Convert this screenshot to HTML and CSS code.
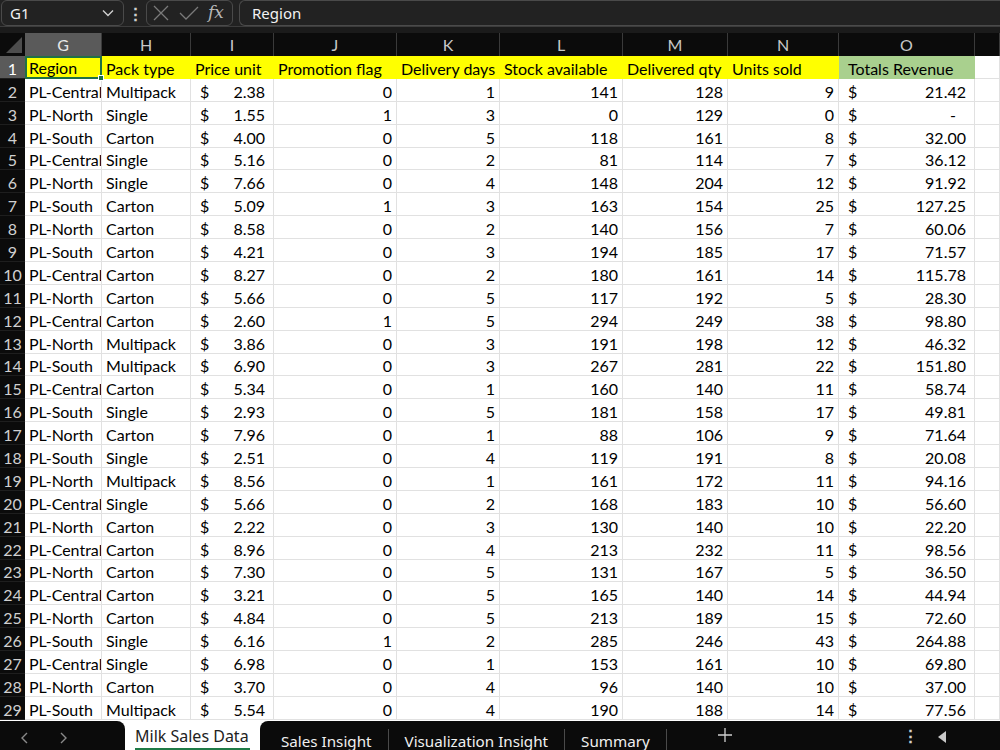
FILE: index.html
```html
<!DOCTYPE html>
<html lang="en">
<head>
    <meta charset="UTF-8">
    <title>Milk Sales Data</title>
    <link rel="stylesheet" href="styles.css">
</head>
<body>

<div class="app">
    <div class="formula-bar">
        <div class="name-box">
            <span>G1</span>
            <svg class="chev" width="12" height="8" viewBox="0 0 12 8"><path d="M1 1.5 L6 6.5 L11 1.5" fill="none" stroke="#d0d0d0" stroke-width="1.4"/></svg>
        </div>
        <span class="dots">&#8942;</span>
        <div class="fx-box">
            <svg width="18" height="18" viewBox="0 0 18 18"><path d="M2 2 L16 16 M16 2 L2 16" stroke="#7a7a7a" stroke-width="1.3"/></svg>
            <svg width="20" height="18" viewBox="0 0 20 18"><path d="M1 9 L7 15 L19 3" fill="none" stroke="#7a7a7a" stroke-width="1.3"/></svg>
            <span class="fx">fx</span>
        </div>
        <div class="formula-input">Region</div>
    </div>
    <div class="bar-gap"></div>

    <div class="sheet" id="sheet"></div>

    <div class="tabs">
        <div class="tabs-left">
            <svg width="10" height="14" viewBox="0 0 10 14"><path d="M7 2 L2 7 L7 12" fill="none" stroke="#8a8a8a" stroke-width="1.4"/></svg>
            <svg width="10" height="14" viewBox="0 0 10 14"><path d="M3 2 L8 7 L3 12" fill="none" stroke="#8a8a8a" stroke-width="1.4"/></svg>
        </div>
        <div class="tab active">Milk Sales Data</div>
        <div class="tabs-right">
            <div class="tab">Sales Insight</div>
            <div class="tab">Visualization Insight</div>
            <div class="tab">Summary</div>
            <svg class="add" width="14" height="14" viewBox="0 0 14 14"><path d="M7 0 V14 M0 7 H14" stroke="#d0d0d0" stroke-width="1.3"/></svg>
            <span class="more">&#8942;</span>
            <svg class="scroll-left" width="10" height="12" viewBox="0 0 10 12"><path d="M9 0 L9 12 L1 6 Z" fill="#c8c8c8"/></svg>
        </div>
    </div>
</div>

<script>
    var columns = ['G', 'H', 'I', 'J', 'K', 'L', 'M', 'N', 'O', ''];
    var headers = ['Region', 'Pack type', 'Price unit', 'Promotion flag', 'Delivery days', 'Stock available', 'Delivered qty', 'Units sold', 'Totals Revenue'];
    var rows = [
        ['PL-Central', 'Multipack', '2.38', 0, 1, 141, 128, 9, '21.42'],
        ['PL-North', 'Single', '1.55', 1, 3, 0, 129, 0, '-'],
        ['PL-South', 'Carton', '4.00', 0, 5, 118, 161, 8, '32.00'],
        ['PL-Central', 'Single', '5.16', 0, 2, 81, 114, 7, '36.12'],
        ['PL-North', 'Single', '7.66', 0, 4, 148, 204, 12, '91.92'],
        ['PL-South', 'Carton', '5.09', 1, 3, 163, 154, 25, '127.25'],
        ['PL-North', 'Carton', '8.58', 0, 2, 140, 156, 7, '60.06'],
        ['PL-South', 'Carton', '4.21', 0, 3, 194, 185, 17, '71.57'],
        ['PL-Central', 'Carton', '8.27', 0, 2, 180, 161, 14, '115.78'],
        ['PL-North', 'Carton', '5.66', 0, 5, 117, 192, 5, '28.30'],
        ['PL-Central', 'Carton', '2.60', 1, 5, 294, 249, 38, '98.80'],
        ['PL-North', 'Multipack', '3.86', 0, 3, 191, 198, 12, '46.32'],
        ['PL-South', 'Multipack', '6.90', 0, 3, 267, 281, 22, '151.80'],
        ['PL-Central', 'Carton', '5.34', 0, 1, 160, 140, 11, '58.74'],
        ['PL-South', 'Single', '2.93', 0, 5, 181, 158, 17, '49.81'],
        ['PL-North', 'Carton', '7.96', 0, 1, 88, 106, 9, '71.64'],
        ['PL-South', 'Single', '2.51', 0, 4, 119, 191, 8, '20.08'],
        ['PL-North', 'Multipack', '8.56', 0, 1, 161, 172, 11, '94.16'],
        ['PL-Central', 'Single', '5.66', 0, 2, 168, 183, 10, '56.60'],
        ['PL-North', 'Carton', '2.22', 0, 3, 130, 140, 10, '22.20'],
        ['PL-Central', 'Carton', '8.96', 0, 4, 213, 232, 11, '98.56'],
        ['PL-North', 'Carton', '7.30', 0, 5, 131, 167, 5, '36.50'],
        ['PL-Central', 'Carton', '3.21', 0, 5, 165, 140, 14, '44.94'],
        ['PL-North', 'Carton', '4.84', 0, 5, 213, 189, 15, '72.60'],
        ['PL-South', 'Single', '6.16', 1, 2, 285, 246, 43, '264.88'],
        ['PL-Central', 'Single', '6.98', 0, 1, 153, 161, 10, '69.80'],
        ['PL-North', 'Carton', '3.70', 0, 4, 96, 140, 10, '37.00'],
        ['PL-South', 'Multipack', '5.54', 0, 4, 190, 188, 14, '77.56']
    ];

    var html = '<div class="corner"></div>';
    columns.forEach(function (c, i) {
        html += '<div class="col-head' + (i === 0 ? ' selected' : '') + '">' + c + '</div>';
    });

    html += '<div class="row-head selected">1</div>';
    headers.forEach(function (h, i) {
        var cls = i === 8 ? 'cell green' : 'cell yellow';
        if (i === 0) cls += ' active';
        html += '<div class="' + cls + '">' + h + (i === 0 ? '<span class="handle"></span>' : '') + '</div>';
    });
    html += '<div class="cell"></div>';

    function money(v) {
        var cls = v === '-' ? 'num dash' : 'num';
        return '<div class="cell money"><span>$</span><span class="' + cls + '">' + v + '</span></div>';
    }

    rows.forEach(function (r, n) {
        html += '<div class="row-head">' + (n + 2) + '</div>';
        html += '<div class="cell">' + r[0] + '</div>';
        html += '<div class="cell">' + r[1] + '</div>';
        html += money(r[2]);
        for (var k = 3; k < 8; k++) {
            html += '<div class="cell right">' + r[k] + '</div>';
        }
        html += money(r[8]);
        html += '<div class="cell"></div>';
    });

    document.getElementById('sheet').innerHTML = html;
</script>

</body>
</html>
```

FILE: styles.css
```css
* {
    box-sizing: border-box;
}
body {
    margin: 0;
    width: 1000px;
    height: 750px;
    overflow: hidden;
    background-color: #fff;
    font-family: "Noto Sans", "Open Sans", sans-serif;
}
.app {
    display: flex;
    flex-direction: column;
    height: 750px;
}

/* formula bar */
.formula-bar {
    height: 27px;
    background-color: #222;
    border-bottom: 1px solid #3c3c3c;
    display: flex;
    align-items: center;
    padding-left: 1px;
    color: #f2f2f2;
    font-size: 15px;
}
.name-box {
    width: 123px;
    height: 26px;
    border: 1px solid #4a4a4a;
    border-radius: 6px;
    display: flex;
    align-items: center;
    justify-content: space-between;
    padding: 0 9px 0 8px;
}
.dots {
    width: 22px;
    text-align: center;
    font-size: 17px;
    font-weight: bold;
    color: #cfcfcf;
}
.fx-box {
    width: 87px;
    height: 26px;
    border: 1px solid #4a4a4a;
    border-radius: 6px;
    display: flex;
    align-items: center;
    gap: 9px;
    padding-left: 5px;
}
.fx {
    font-family: "DejaVu Serif", "Liberation Serif", serif;
    font-style: italic;
    font-size: 17px;
    color: #b8b8b8;
    margin-top: -2px;
}
.formula-input {
    flex: 1;
    height: 26px;
    margin-left: 6px;
    border: 1px solid #4a4a4a;
    border-right: none;
    border-radius: 6px 0 0 6px;
    padding-left: 12px;
    line-height: 24px;
}
.bar-gap {
    height: 6px;
    background-color: #1b1b1b;
}

/* sheet grid */
.sheet {
    display: grid;
    grid-template-columns: 25px 77px 89px 83px 123px 103px 123px 105px 111px 136px 1fr;
    grid-template-rows: 23px repeat(29, 22.9px);
    font-family: Lato, "Liberation Sans", sans-serif;
    font-size: 16px;
    color: #000;
    overflow: hidden;
}
.corner {
    background-color: #0b0b0b;
    position: relative;
}
.corner::after {
    content: "";
    position: absolute;
    right: 3px;
    bottom: 3px;
    border-style: solid;
    border-width: 0 0 16px 16px;
    border-color: transparent transparent #4d4d4d transparent;
}
.col-head {
    background-color: #0b0b0b;
    color: #c8c8c8;
    border-right: 1px solid #3a3a3a;
    text-align: center;
    line-height: 23px;
}
.col-head.selected {
    background-color: #5a5a5a;
    color: #e8e8e8;
}
.row-head {
    background-color: #0b0b0b;
    color: #d0d0d0;
    text-align: center;
    display: flex;
    align-items: flex-end;
    justify-content: center;
    padding-bottom: 0;
    border-bottom: 1px solid #1e1e1e;
}
.row-head.selected {
    background-color: #5a5a5a;
    color: #fff;
}
.cell {
    border-right: 1px solid #e1e1e1;
    border-bottom: 1px solid #e1e1e1;
    padding: 0 4px 0 4px;
    display: flex;
    align-items: flex-end;
    white-space: nowrap;
    overflow: hidden;
}
.cell.right {
    justify-content: flex-end;
}
.cell.yellow {
    background-color: #ffff00;
    border-color: #ffff00;
}
.cell.green {
    background-color: #a9d08e;
    border-color: #a9d08e;
    padding-left: 9px;
}
.cell.active {
    border: 2px solid #1f7145;
    padding-left: 2px;
    overflow: visible;
    position: relative;
}
.handle {
    position: absolute;
    right: -4px;
    bottom: -4px;
    width: 6px;
    height: 6px;
    background-color: #1f7145;
    border: 1px solid #fff;
}
.money {
    justify-content: space-between;
    padding: 0 8px 0 9px;
}
.num.dash {
    padding-right: 10px;
}

/* sheet tabs */
.tabs {
    height: 29px;
    margin-top: auto;
    display: flex;
    background-color: #fff;
    font-size: 15.2px;
}
.tabs-left {
    width: 125px;
    background-color: #0b0b0b;
    border-top-right-radius: 8px;
    display: flex;
    align-items: center;
    gap: 28px;
    padding-left: 20px;
    padding-top: 4px;
}
.tab {
    padding: 2px 16px 0 16px;
    color: #f0f0f0;
    border-right: 1px solid #4a4a4a;
    margin-top: 8px;
    line-height: 21px;
    white-space: nowrap;
}
.tab.active {
    width: 135px;
    margin-top: 0;
    padding: 5px 0 0 10px;
    font-size: 16px;
    color: #222;
    border-right: none;
    background-color: #fff;
    position: relative;
}
.tab.active::after {
    content: "";
    position: absolute;
    left: 10px;
    width: 115px;
    bottom: 0;
    height: 2px;
    background-color: #1e7a46;
}
.tabs-right {
    flex: 1;
    background-color: #0b0b0b;
    border-top-left-radius: 8px;
    display: flex;
    align-items: flex-start;
    padding-left: 5px;
}
.add {
    margin-left: 51px;
    margin-top: 7px;
}
.more {
    margin-left: 170px;
    margin-top: 6px;
    font-size: 17px;
    line-height: 18px;
    font-weight: bold;
    color: #cfcfcf;
}
.scroll-left {
    margin-left: 18px;
    margin-top: 10px;
}
```
